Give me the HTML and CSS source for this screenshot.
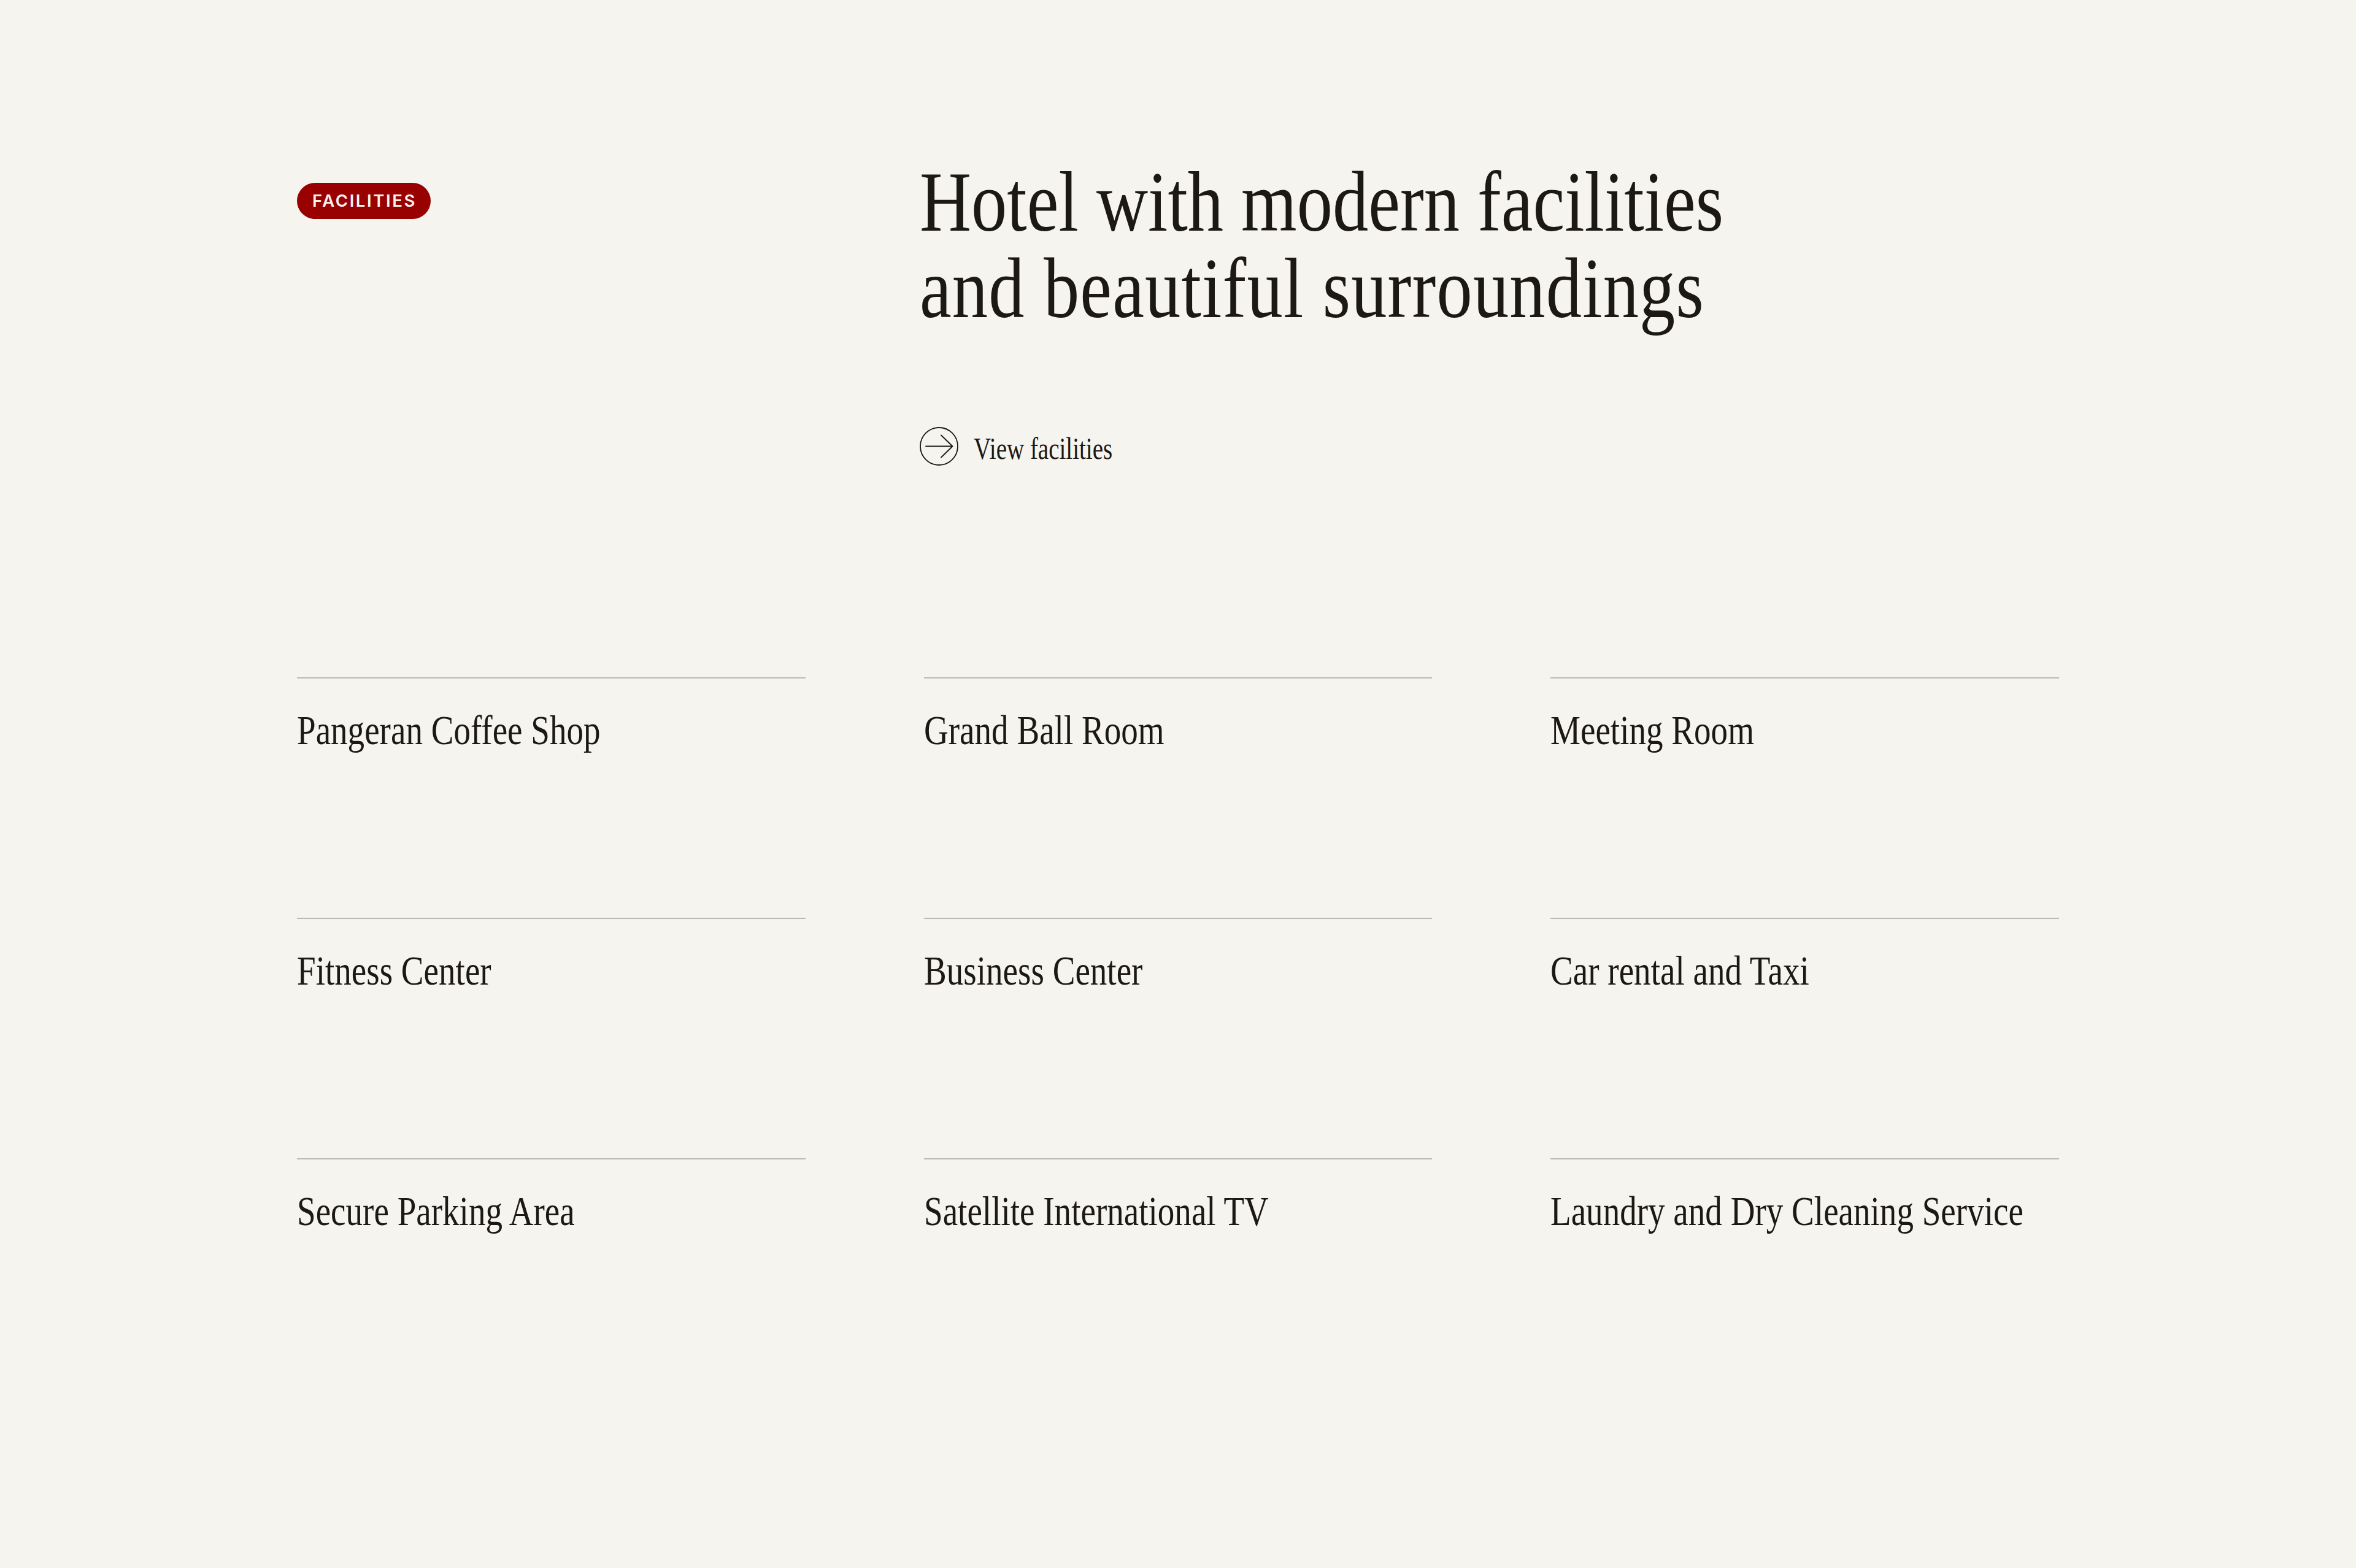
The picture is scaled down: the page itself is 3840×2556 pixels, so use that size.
FILE: index.html
```html
<!DOCTYPE html>
<html lang="en">
<head>
<meta charset="utf-8">
<title>Facilities</title>
<link rel="stylesheet" href="styles.css">
</head>
<body>
<main class="facilities">
  <header class="intro">
    <div class="intro-tag">
      <span class="badge">FACILITIES</span>
    </div>
    <div class="intro-main">
      <h1 class="headline">
        <span class="headline-line">Hotel with modern facilities</span>
        <span class="headline-line headline-line--wide">and beautiful surroundings</span>
      </h1>
      <a class="view-link" href="#">
        <svg class="view-icon" viewBox="0 0 63 63" width="63" height="63" aria-hidden="true">
          <circle cx="31.5" cy="31.5" r="30.5" fill="none" stroke="currentColor" stroke-width="1.8"/>
          <path d="M10 31.5 H53.5 M35 13.5 L53.5 31.5 L35 49.5" fill="none" stroke="currentColor" stroke-width="1.8" stroke-linecap="round" stroke-linejoin="round"/>
        </svg>
        <span class="view-text">View facilities</span>
      </a>
    </div>
  </header>

  <ul class="facility-grid">
    <li class="facility"><span class="facility-name">Pangeran Coffee Shop</span></li>
    <li class="facility"><span class="facility-name">Grand Ball Room</span></li>
    <li class="facility"><span class="facility-name">Meeting Room</span></li>
    <li class="facility"><span class="facility-name">Fitness Center</span></li>
    <li class="facility"><span class="facility-name">Business Center</span></li>
    <li class="facility"><span class="facility-name">Car rental and Taxi</span></li>
    <li class="facility"><span class="facility-name">Secure Parking Area</span></li>
    <li class="facility"><span class="facility-name">Satellite International TV</span></li>
    <li class="facility"><span class="facility-name">Laundry and Dry Cleaning Service</span></li>
  </ul>
</main>
</body>
</html>
```
FILE: styles.css
```css
html, body {
  margin: 0;
  padding: 0;
  background: #f5f4ef;
}

body {
  color: #1c1813;
  font-family: "Liberation Serif", "Times New Roman", serif;
  min-height: 2556px;
}

.facilities {
  width: 2872px;
  margin: 0 auto;
  padding-top: 258px;
}

.intro {
  display: grid;
  grid-template-columns: 1015px minmax(0, 1fr);
  align-items: start;
}

.intro-tag {
  padding-top: 40px;
}

.badge {
  display: inline-block;
  background: #990000;
  color: #f7f2ee;
  font-family: Inter, "Liberation Sans", sans-serif;
  font-weight: 600;
  font-size: 27.5px;
  line-height: 59px;
  height: 59px;
  letter-spacing: 2.6px;
  padding: 0 23px 0 25px;
  border-radius: 30px;
}

.intro-main {
  display: flex;
  flex-direction: column;
  align-items: flex-start;
}

.headline {
  margin: 0;
  font-weight: 400;
  font-size: 140px;
  line-height: 141px;
  letter-spacing: 0;
  transform: scaleX(0.832);
  transform-origin: left top;
  white-space: nowrap;
}

.headline-line {
  display: block;
}

.headline-line--wide {
  letter-spacing: 1.4px;
}

.view-link {
  display: flex;
  align-items: center;
  gap: 25px;
  margin-top: 152px;
  color: #1c1813;
  text-decoration: none;
}

.view-icon {
  display: block;
  flex: none;
}

.view-text {
  display: inline-block;
  font-size: 50px;
  line-height: 63px;
  padding-top: 8px;
  transform: scaleX(0.78);
  transform-origin: left center;
  white-space: nowrap;
}

.facility-grid {
  list-style: none;
  margin: 341px 0 0;
  padding: 0;
  display: grid;
  grid-template-columns: repeat(3, minmax(0, 1fr));
  column-gap: 193px;
}

.facility {
  box-sizing: border-box;
  min-width: 0;
  height: 392px;
  border-top: 2px solid #bcbab6;
  padding-top: 50px;
}

.facility-name {
  display: inline-block;
  font-size: 68px;
  line-height: 68px;
  transform: scaleX(0.81);
  transform-origin: left top;
  white-space: nowrap;
}
```
